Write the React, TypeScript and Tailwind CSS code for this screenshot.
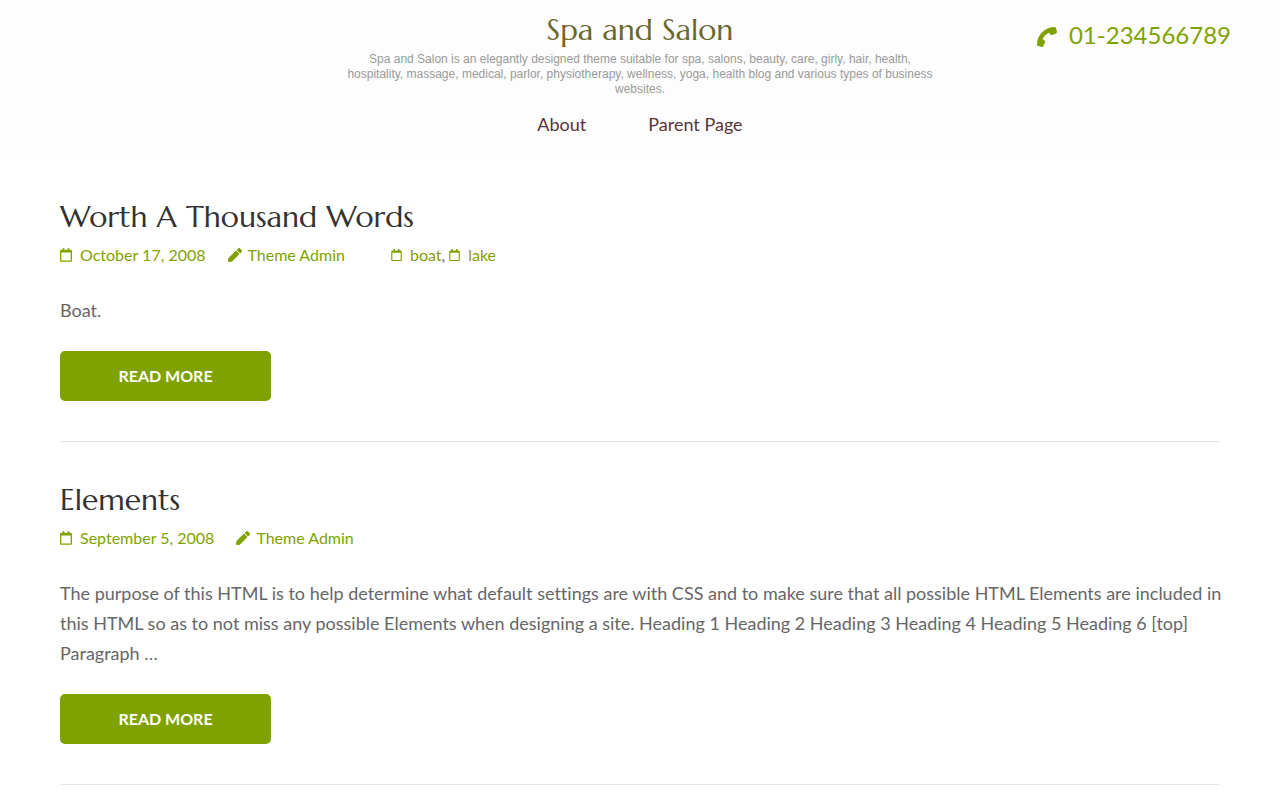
import { FaPen, FaRegCalendar } from "react-icons/fa";
import { FaPhone } from "react-icons/fa6";

type Post = {
  title: string;
  date: string;
  author: string;
  tags: string[];
  excerpt: string;
};

const posts: Post[] = [
  {
    title: "Worth A Thousand Words",
    date: "October 17, 2008",
    author: "Theme Admin",
    tags: ["boat", "lake"],
    excerpt: "Boat.",
  },
  {
    title: "Elements",
    date: "September 5, 2008",
    author: "Theme Admin",
    tags: [],
    excerpt:
      "The purpose of this HTML is to help determine what default settings are with CSS and to make sure that all possible HTML Elements are included in this HTML so as to not miss any possible Elements when designing a site. Heading 1 Heading 2 Heading 3 Heading 4 Heading 5 Heading 6 [top] Paragraph …",
  },
];

function Header() {
  return (
    <header className="grid grid-cols-[1fr_minmax(0,590px)_1fr] bg-[#fdfdfd] px-[49px] pt-2.5 pb-[15px]">
      <div className="col-start-2 text-center">
        <h1 className="font-[Marcellus,Lato,sans-serif] text-[30px] leading-10 text-[#686830]">
          <a href="#home">Spa and Salon</a>
        </h1>
        <p className="mt-0.5 font-['Liberation_Sans',Arial,sans-serif] text-xs leading-[15px] text-[#999]">
          Spa and Salon is an elegantly designed theme suitable for spa, salons, beauty, care, girly, hair, health,
          hospitality, massage, medical, parlor, physiotherapy, wellness, yoga, health blog and various types of
          business websites.
        </p>
        <nav className="mt-1.5 flex justify-center gap-[62px] py-1.5 text-lg leading-[30px] text-[#56363a]">
          <a href="#about">About</a>
          <a href="#parent">Parent Page</a>
        </nav>
      </div>
      <a
        href="tel:01234566789"
        className="mt-[5px] flex h-10 items-center gap-3 justify-self-end text-2xl whitespace-nowrap text-[#80a200]"
      >
        <FaPhone className="mt-1 size-5 rotate-90" />
        01-234566789
      </a>
    </header>
  );
}

function Article({ post }: { post: Post }) {
  return (
    <article className="mb-[39px] border-b border-[#e5e5e5] pb-10">
      <h2 className="font-[Marcellus,Lato,sans-serif] text-[30px] leading-[38px] text-[#333]">
        <a href="#post">{post.title}</a>
      </h2>
      <div className="mt-1 flex items-center text-base leading-[30px] text-[#80a200]">
        <a href="#date" className="flex items-center gap-2">
          <FaRegCalendar className="h-3.5 w-3" />
          {post.date}
        </a>
        <a href="#author" className="ml-[22px] flex items-center gap-1.5">
          <FaPen className="size-3.5" />
          {post.author}
        </a>
        {post.tags.length > 0 && (
          <ul className="ml-[46px] flex gap-1">
            {post.tags.map((tag, i) => (
              <li key={tag} className="flex items-center">
                <a href="#tag" className="flex items-center gap-2">
                  <FaRegCalendar className="h-3 w-[11px]" />
                  {tag}
                </a>
                {i < post.tags.length - 1 && <span className="text-[#666]">,</span>}
              </li>
            ))}
          </ul>
        )}
      </div>
      <p className="-mr-2 mt-[25px] text-lg leading-[30px] text-[#666]">{post.excerpt}</p>
      <a
        href="#more"
        className="mt-[26px] flex h-[50px] w-[211px] items-center justify-center rounded-[5px] bg-[#80a200] text-base font-bold text-white uppercase"
      >
        Read More
      </a>
    </article>
  );
}

export default function App() {
  return (
    <div className="min-h-screen bg-white font-[Lato,sans-serif] [font-variant-ligatures:none]">
      <Header />
      <main className="mx-auto max-w-[1200px] px-5 pt-[38px]">
        {posts.map((post) => (
          <Article key={post.title} post={post} />
        ))}
      </main>
    </div>
  );
}
